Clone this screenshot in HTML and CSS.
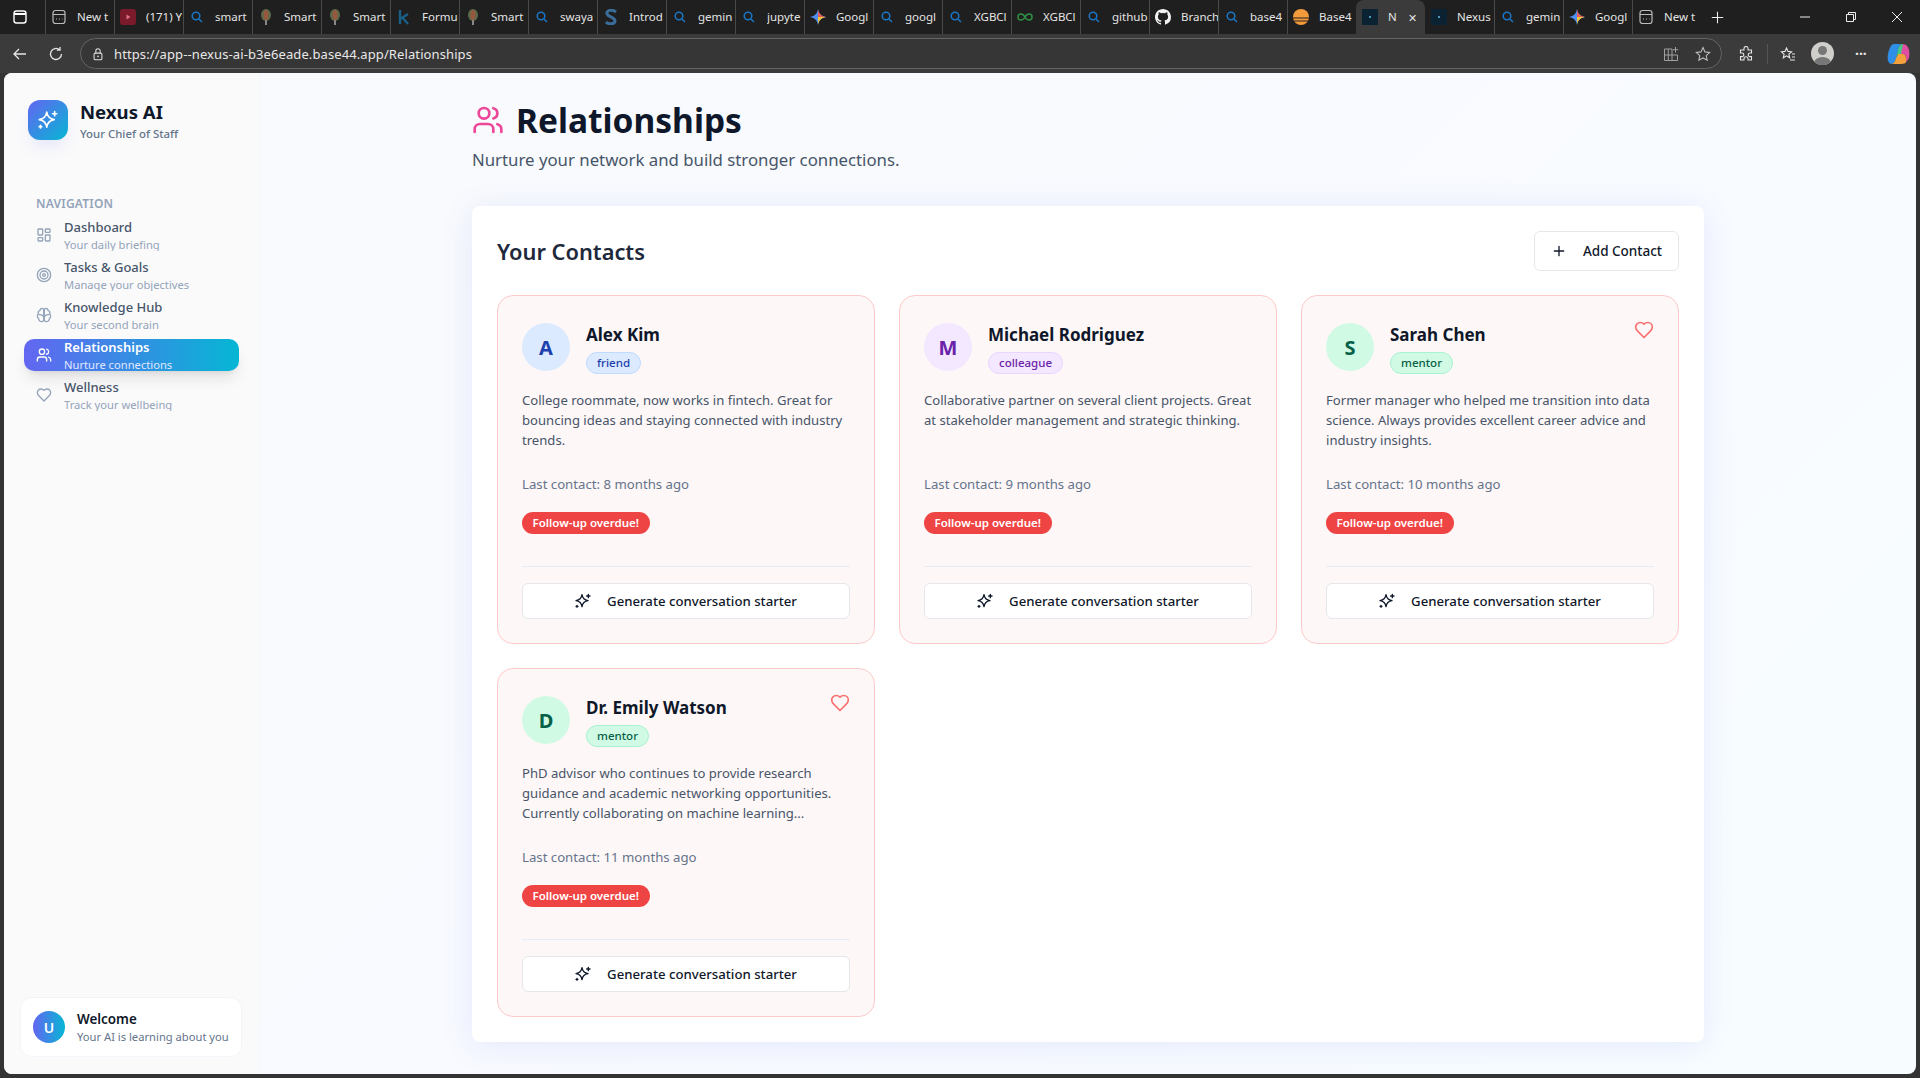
FILE: index.html
```html
<!DOCTYPE html>
<html lang="en">
<head>
    <meta charset="UTF-8">
    <title>Relationships</title>
    <link rel="stylesheet" href="styles.css">
</head>
<body>
    <svg class="defs" width="0" height="0">
        <symbol id="i-page" viewBox="0 0 16 16"><rect x="2" y="1.5" width="12" height="13" rx="2.5" fill="none" stroke="#bbb" stroke-width="1.2"/><path d="M2 5.5h12M5 10h1M8 10h1M11 10h.5" stroke="#bbb" stroke-width="1.2" fill="none"/></symbol>
        <symbol id="i-yt" viewBox="0 0 16 16"><rect width="16" height="16" rx="3" fill="#7a1a2b"/><path d="M6.5 5.5v5l4-2.500z" fill="#e0707f"/></symbol>
        <symbol id="i-search" viewBox="0 0 16 16"><circle cx="7" cy="7" r="3.800" fill="none" stroke="#1a76c4" stroke-width="1.500"/><path d="M10 10l3 3" stroke="#1a76c4" stroke-width="1.500"/></symbol>
        <symbol id="i-smart" viewBox="0 0 16 16"><ellipse cx="8" cy="6" rx="5" ry="6" fill="#5b6b4a"/><ellipse cx="8" cy="6" rx="2.500" ry="5" fill="#96583e"/><path d="M7 11h2v5H7z" fill="#888"/></symbol>
        <symbol id="i-k" viewBox="0 0 16 16"><path d="M4 1v14M12 5l-8 5M6 8l6 7" stroke="#1b5f86" stroke-width="2.400" fill="none"/></symbol>
        <symbol id="i-s" viewBox="0 0 16 16"><path d="M13 3C9 0 3 1 4 5c1 3 8 3 8 7 0 3-6 4-9 1" stroke="#3a6d99" stroke-width="3" fill="none"/></symbol>
        <symbol id="i-gem" viewBox="0 0 16 16"><path d="M8 0c.7 4.500 3 7 8 8-5 1-7.300 3.500-8 8-.7-4.500-3-7-8-8 5-1 7.300-3.500 8-8z" fill="#4d8ff0"/><path d="M8 0c.7 4.500 3 7 8 8H8z" fill="#e85a5a"/><path d="M8 16c.7-4.500 3-7 8-8H8z" fill="#f4c534"/></symbol>
        <symbol id="i-gfg" viewBox="0 0 16 16"><path d="M8 8C6 4 1 4 1 8s5 4 7 0c2-4 7-4 7 0s-5 4-7 0z" fill="none" stroke="#2f8d46" stroke-width="1.500"/></symbol>
        <symbol id="i-github" viewBox="0 0 16 16"><path fill="#f2f2f2" d="M8 0C3.580 0 0 3.580 0 8c0 3.540 2.290 6.530 5.470 7.590.4.070.55-.17.55-.38v-1.340c-2.230.48-2.700-1.070-2.700-1.070-.36-.92-.89-1.170-.89-1.170-.73-.5.050-.49.050-.49.800.060 1.230.830 1.230.830.710 1.220 1.870.870 2.330.660.070-.520.280-.870.510-1.070-1.780-.200-3.640-.890-3.640-3.950 0-.870.310-1.590.820-2.150-.080-.200-.360-1.020.080-2.120 0 0 .670-.210 2.200.820a7.600 7.600 0 0 1 4 0c1.530-1.040 2.200-.820 2.200-.820.440 1.100.160 1.920.080 2.120.510.560.820 1.270.820 2.150 0 3.070-1.870 3.750-3.650 3.950.290.250.540.730.540 1.480v2.200c0 .210.150.460.550.380A8 8 0 0 0 16 8c0-4.420-3.580-8-8-8z"/></symbol>
        <symbol id="i-orange" viewBox="0 0 16 16"><circle cx="8" cy="8" r="8" fill="#f29a3c"/><path d="M0 9h16M1 12h14" stroke="#26221f" stroke-width="1"/></symbol>
        <symbol id="i-nexus" viewBox="0 0 16 16"><rect width="16" height="16" fill="#0b2233"/><rect x="7" y="7" width="2" height="2" fill="#4a9bb5"/></symbol>
        <symbol id="i-sparkle" viewBox="0 0 24 24"><path d="M10.500 2.500c.9 5.600 3.400 8.100 9 9-5.600.9-8.100 3.400-9 9-.9-5.600-3.400-8.100-9-9 5.600-.9 8.100-3.400 9-9z" fill="none" stroke="currentColor" stroke-width="2" stroke-linejoin="round"/><path d="M20 2v5M22.500 4.500h-5M3 18.500v3M4.500 20h-3" fill="none" stroke="currentColor" stroke-width="2" stroke-linecap="round"/></symbol>
        <symbol id="i-users" viewBox="0 0 24 24"><g fill="none" stroke="currentColor" stroke-width="2" stroke-linecap="round" stroke-linejoin="round"><path d="M16 21v-2a4 4 0 0 0-4-4H6a4 4 0 0 0-4 4v2"/><circle cx="9" cy="7" r="4"/><path d="M22 21v-2a4 4 0 0 0-3-3.870"/><path d="M16 3.130a4 4 0 0 1 0 7.750"/></g></symbol>
        <symbol id="i-heart" viewBox="0 0 24 24"><path d="M19 14c1.490-1.460 3-3.210 3-5.500A5.500 5.500 0 0 0 16.500 3c-1.760 0-3 .5-4.500 2-1.500-1.500-2.740-2-4.500-2A5.500 5.500 0 0 0 2 8.500c0 2.300 1.500 4.050 3 5.500l7 7z" fill="none" stroke="currentColor" stroke-width="2" stroke-linecap="round" stroke-linejoin="round"/></symbol>
    </svg>

    <div class="tabstrip">
        <svg class="tab-actions" viewBox="0 0 16 16"><rect x="2" y="2" width="12" height="12" rx="2.500" fill="none" stroke="#fff" stroke-width="1.400"/><path d="M2 5h12" stroke="#fff" stroke-width="2"/></svg>
        <div class="tabs">
            <div class="tab"><svg class="fav"><use href="#i-page"/></svg><span>New t</span></div>
            <div class="tab"><svg class="fav"><use href="#i-yt"/></svg><span>(171) Y</span></div>
            <div class="tab"><svg class="fav"><use href="#i-search"/></svg><span>smart</span></div>
            <div class="tab"><svg class="fav"><use href="#i-smart"/></svg><span>Smart</span></div>
            <div class="tab"><svg class="fav"><use href="#i-smart"/></svg><span>Smart</span></div>
            <div class="tab"><svg class="fav"><use href="#i-k"/></svg><span>Formu</span></div>
            <div class="tab"><svg class="fav"><use href="#i-smart"/></svg><span>Smart</span></div>
            <div class="tab"><svg class="fav"><use href="#i-search"/></svg><span>swaya</span></div>
            <div class="tab"><svg class="fav"><use href="#i-s"/></svg><span>Introd</span></div>
            <div class="tab"><svg class="fav"><use href="#i-search"/></svg><span>gemin</span></div>
            <div class="tab"><svg class="fav"><use href="#i-search"/></svg><span>jupyte</span></div>
            <div class="tab"><svg class="fav"><use href="#i-gem"/></svg><span>Googl</span></div>
            <div class="tab"><svg class="fav"><use href="#i-search"/></svg><span>googl</span></div>
            <div class="tab"><svg class="fav"><use href="#i-search"/></svg><span>XGBCl</span></div>
            <div class="tab"><svg class="fav"><use href="#i-gfg"/></svg><span>XGBCl</span></div>
            <div class="tab"><svg class="fav"><use href="#i-search"/></svg><span>github</span></div>
            <div class="tab"><svg class="fav"><use href="#i-github"/></svg><span>Branch</span></div>
            <div class="tab"><svg class="fav"><use href="#i-search"/></svg><span>base4</span></div>
            <div class="tab"><svg class="fav"><use href="#i-orange"/></svg><span>Base4</span></div>
            <div class="tab tab-active"><svg class="fav"><use href="#i-nexus"/></svg><span>N</span><b class="tab-close">✕</b></div>
            <div class="tab tab-after"><svg class="fav"><use href="#i-nexus"/></svg><span>Nexus</span></div>
            <div class="tab"><svg class="fav"><use href="#i-search"/></svg><span>gemin</span></div>
            <div class="tab"><svg class="fav"><use href="#i-gem"/></svg><span>Googl</span></div>
            <div class="tab"><svg class="fav"><use href="#i-page"/></svg><span>New t</span></div>
        </div>
        <svg class="new-tab" viewBox="0 0 16 16"><path d="M8 1v14M1 8h14" stroke="#eee" stroke-width="1.300"/></svg>
        <div class="window-btns">
            <svg viewBox="0 0 12 12"><path d="M1 6h10" stroke="#eee"/></svg>
            <svg viewBox="0 0 12 12"><path d="M1.500 3.500h7v7h-7zM3.500 3.500v-2h7v7h-2" fill="none" stroke="#eee"/></svg>
            <svg viewBox="0 0 12 12"><path d="M1 1l10 10M11 1L1 11" stroke="#eee"/></svg>
        </div>
    </div>

    <div class="toolbar">
        <svg class="tool" viewBox="0 0 16 16"><path d="M14 8H2M7 3L2 8l5 5" fill="none" stroke="#e6e6e6" stroke-width="1.300"/></svg>
        <svg class="tool" viewBox="0 0 16 16"><path d="M13.500 8a5.500 5.500 0 1 1-1.800-4.100M12 1v3.200H8.800" fill="none" stroke="#e6e6e6" stroke-width="1.300"/></svg>
        <div class="address">
            <svg class="lock" viewBox="0 0 16 16"><rect x="3.500" y="7" width="9" height="7.500" rx="1.500" fill="none" stroke="#ddd" stroke-width="1.200"/><path d="M5.500 7V4.500a2.500 2.500 0 0 1 5 0V7" fill="none" stroke="#ddd" stroke-width="1.200"/><circle cx="8" cy="10.700" r="1" fill="#ddd"/></svg>
            <span class="url">https://app--nexus-ai-b3e6eade.base44.app/Relationships</span>
            <svg class="addr-icon" viewBox="0 0 16 16"><path d="M1.500 3h7.500v11.500H1.500zM1.500 9H14.500V14.500H9M5.250 3v11.500M12.500 1v5.500M9.800 3.700h5.400" fill="none" stroke="#a0a0a0" stroke-width="1"/></svg>
            <svg class="addr-icon" viewBox="0 0 16 16"><path d="M8 1.500l2 4.400 4.700.500-3.500 3.200 1 4.700L8 12l-4.200 2.300 1-4.700L1.300 6.400 6 5.900z" fill="none" stroke="#bbb" stroke-width="1.100"/></svg>
        </div>
        <svg class="tool tool-ext" viewBox="0 0 16 16"><path d="M6 2.500a2 2 0 0 1 4 0V4h3.500v3H12a1.800 1.800 0 0 0 0 3.600h1.500V14H10v-1.200a2 2 0 0 0-4 0V14H2.500v-3.400H4A1.800 1.800 0 0 0 4 7H2.500V4H6z" fill="none" stroke="#e6e6e6" stroke-width="1.100"/></svg>
        <span class="tool-sep"></span>
        <svg class="tool" viewBox="0 0 16 16"><path d="M6.500 2l1.500 3.400 3.600.4-2.700 2.400.8 3.600-3.200-1.900-3.200 1.900.8-3.600L1.400 5.800 5 5.400zM12 8h3M12 11h3M10 14h5" fill="none" stroke="#e6e6e6" stroke-width="1.100"/></svg>
        <div class="profile"><span class="profile-head"></span><span class="profile-body"></span></div>
        <span class="more">···</span>
        <svg class="copilot" viewBox="0 0 24 24"><path d="M7 2h9c-3 0-4 2-5 6l-2 8c-.700 3-2 6-5 6-3-1-4-5-3-10C2 7 4 2 7 2z" fill="#2f8fe8"/><path d="M16 2c3 0 5 2 6 6 1 5 0 10-3 12 1-4-1-8-3-8h-5l1-4c1-4 2-6 4-6z" fill="#e04f9f"/><path d="M4 22h10c3 0 5-1 5-2 1-4-1-8-3-8h-5l-2 4c-.700 3-2 6-5 6z" fill="#f2a13c"/><path d="M9 16l2-8c.500-3 2-6 5-6l-2 10h-3z" fill="#42c98a"/></svg>
    </div>

    <div class="page">
        <aside class="sidebar">
            <div class="brand">
                <div class="brand-logo"><svg><use href="#i-sparkle"/></svg></div>
                <div class="brand-text">
                    <div class="brand-name">Nexus AI</div>
                    <div class="brand-sub">Your Chief of Staff</div>
                </div>
            </div>
            <div class="nav-label">NAVIGATION</div>
            <nav class="nav">
                <a class="nav-item">
                    <svg class="nav-icon" viewBox="0 0 24 24"><g fill="none" stroke="currentColor" stroke-width="2" stroke-linejoin="round"><rect x="3" y="3" width="7" height="9" rx="1"/><rect x="14" y="3" width="7" height="5" rx="1"/><rect x="14" y="12" width="7" height="9" rx="1"/><rect x="3" y="16" width="7" height="5" rx="1"/></g></svg>
                    <div class="nav-text"><div class="nav-title">Dashboard</div><div class="nav-sub">Your daily briefing</div></div>
                </a>
                <a class="nav-item">
                    <svg class="nav-icon" viewBox="0 0 24 24"><g fill="none" stroke="currentColor" stroke-width="2"><circle cx="12" cy="12" r="10"/><circle cx="12" cy="12" r="6"/><circle cx="12" cy="12" r="2"/></g></svg>
                    <div class="nav-text"><div class="nav-title">Tasks &amp; Goals</div><div class="nav-sub">Manage your objectives</div></div>
                </a>
                <a class="nav-item">
                    <svg class="nav-icon" viewBox="0 0 24 24"><g fill="none" stroke="currentColor" stroke-width="2" stroke-linecap="round" stroke-linejoin="round"><path d="M12 5a3 3 0 1 0-5.997.125 4 4 0 0 0-2.526 5.770 4 4 0 0 0 .556 6.588A4 4 0 1 0 12 18z"/><path d="M12 5a3 3 0 1 1 5.997.125 4 4 0 0 1 2.526 5.770 4 4 0 0 1-.556 6.588A4 4 0 1 1 12 18z"/><path d="M12 5v13M4 11c3 0 5 1 8 3M20 11c-3 0-5 1-8 3"/></g></svg>
                    <div class="nav-text"><div class="nav-title">Knowledge Hub</div><div class="nav-sub">Your second brain</div></div>
                </a>
                <a class="nav-item nav-active">
                    <svg class="nav-icon"><use href="#i-users"/></svg>
                    <div class="nav-text"><div class="nav-title">Relationships</div><div class="nav-sub">Nurture connections</div></div>
                </a>
                <a class="nav-item">
                    <svg class="nav-icon"><use href="#i-heart"/></svg>
                    <div class="nav-text"><div class="nav-title">Wellness</div><div class="nav-sub">Track your wellbeing</div></div>
                </a>
            </nav>
            <div class="welcome">
                <div class="welcome-avatar">U</div>
                <div>
                    <div class="welcome-title">Welcome</div>
                    <div class="welcome-sub">Your AI is learning about you</div>
                </div>
            </div>
        </aside>

        <main class="main">
            <div class="content">
                <header class="page-head">
                    <h1 class="page-title"><svg class="title-icon"><use href="#i-users"/></svg>Relationships</h1>
                    <p class="page-sub">Nurture your network and build stronger connections.</p>
                </header>

                <section class="panel">
                    <div class="panel-head">
                        <h2>Your Contacts</h2>
                        <button class="add-btn"><svg viewBox="0 0 24 24"><path d="M5 12h14M12 5v14" fill="none" stroke="currentColor" stroke-width="2" stroke-linecap="round"/></svg>Add Contact</button>
                    </div>

                    <div class="contacts">
                        <article class="contact">
                            <div class="contact-top">
                                <div class="avatar avatar-friend">A</div>
                                <div class="contact-id">
                                    <h3>Alex Kim</h3>
                                    <span class="tag tag-friend">friend</span>
                                </div>
                            </div>
                            <p class="desc">College roommate, now works in fintech. Great for bouncing ideas and staying connected with industry trends.</p>
                            <p class="last">Last contact: 8 months ago</p>
                            <span class="overdue">Follow-up overdue!</span>
                            <button class="starter"><svg><use href="#i-sparkle"/></svg>Generate conversation starter</button>
                        </article>

                        <article class="contact">
                            <div class="contact-top">
                                <div class="avatar avatar-colleague">M</div>
                                <div class="contact-id">
                                    <h3>Michael Rodriguez</h3>
                                    <span class="tag tag-colleague">colleague</span>
                                </div>
                            </div>
                            <p class="desc">Collaborative partner on several client projects. Great at stakeholder management and strategic thinking.</p>
                            <p class="last">Last contact: 9 months ago</p>
                            <span class="overdue">Follow-up overdue!</span>
                            <button class="starter"><svg><use href="#i-sparkle"/></svg>Generate conversation starter</button>
                        </article>

                        <article class="contact">
                            <svg class="fav-heart"><use href="#i-heart"/></svg>
                            <div class="contact-top">
                                <div class="avatar avatar-mentor">S</div>
                                <div class="contact-id">
                                    <h3>Sarah Chen</h3>
                                    <span class="tag tag-mentor">mentor</span>
                                </div>
                            </div>
                            <p class="desc">Former manager who helped me transition into data science. Always provides excellent career advice and industry insights.</p>
                            <p class="last">Last contact: 10 months ago</p>
                            <span class="overdue">Follow-up overdue!</span>
                            <button class="starter"><svg><use href="#i-sparkle"/></svg>Generate conversation starter</button>
                        </article>

                        <article class="contact">
                            <svg class="fav-heart"><use href="#i-heart"/></svg>
                            <div class="contact-top">
                                <div class="avatar avatar-mentor">D</div>
                                <div class="contact-id">
                                    <h3>Dr. Emily Watson</h3>
                                    <span class="tag tag-mentor">mentor</span>
                                </div>
                            </div>
                            <p class="desc">PhD advisor who continues to provide research guidance and academic networking opportunities. Currently collaborating on machine learning...</p>
                            <p class="last">Last contact: 11 months ago</p>
                            <span class="overdue">Follow-up overdue!</span>
                            <button class="starter"><svg><use href="#i-sparkle"/></svg>Generate conversation starter</button>
                        </article>
                    </div>
                </section>
            </div>
        </main>
    </div>
</body>
</html>
```

FILE: styles.css
```css
html, body {
    height: 100%;
}
body {
    margin: 0;
    font-family: "Noto Sans", sans-serif;
    background: #333;
    display: flex;
    flex-direction: column;
    overflow: hidden;
}
.defs {
    position: absolute;
}

/* browser */
.tabstrip {
    height: 34px;
    background: #1f1f1f;
    display: flex;
    align-items: center;
    flex: none;
    font-size: 11.500px;
    color: #e4e4e4;
}
.tab-actions {
    width: 16px;
    height: 16px;
    margin: 0 8px 0 12px;
    flex: none;
    padding-right: 9px;
    box-sizing: content-box;
}
.tabs {
    display: flex;
    height: 100%;
    flex: none;
}
.tab {
    width: 69px;
    height: 100%;
    box-sizing: border-box;
    display: flex;
    align-items: center;
    padding-left: 5px;
    border-left: 1px solid #4a4a4a;
    background-clip: padding-box;
    overflow: hidden;
    white-space: nowrap;
}
.tab span {
    overflow: hidden;
    margin: 0 0 2px 10px;
    width: 37px;
}
.tab-active {
    background: #3b3b3b;
    border-left: 0;
    border-radius: 8px 8px 0 0;
    padding-left: 6px;
}
.tab-active span {
    width: 12px;
}
.tab-after {
    border-left: 0;
    padding-left: 6px;
}
.tab-close {
    font-weight: normal;
    font-size: 11px;
    margin-left: 8px;
}
.fav {
    width: 16px;
    height: 16px;
    flex: none;
}
.new-tab {
    width: 13px;
    height: 13px;
    margin-left: 10px;
    flex: none;
}
.window-btns {
    margin-left: auto;
    display: flex;
    gap: 34px;
    padding-right: 17px;
}
.window-btns svg {
    width: 12px;
    height: 12px;
}
.toolbar {
    height: 39px;
    flex: none;
    background: #3b3b3b;
    display: flex;
    align-items: center;
    padding: 0 0 0 12px;
    box-sizing: border-box;
}
.tool {
    width: 16px;
    height: 16px;
    flex: none;
    margin-right: 20px;
}
.address {
    width: 1642px;
    height: 31px;
    flex: none;
    margin-left: -4px;
    box-sizing: border-box;
    border: 1px solid #646464;
    border-radius: 16px;
    background: #363636;
    display: flex;
    align-items: center;
    padding: 0 10px 0 10px;
    font-size: 13px;
    letter-spacing: 0.1px;
    color: #e8e8e8;
}
.lock {
    width: 14px;
    height: 14px;
    margin-right: 9px;
    flex: none;
}
.url {
    flex: 1;
}
.addr-icon {
    width: 16px;
    height: 16px;
    margin-left: 16px;
}
.tool-ext {
    margin: 0 13px 0 16px;
}
.tool-sep {
    width: 1px;
    height: 20px;
    background: #555;
    margin-right: 12px;
    flex: none;
}
.tool-sep + .tool {
    margin-right: 15px;
}
.profile {
    width: 23px;
    height: 23px;
    border-radius: 50%;
    background: #d0cfcc;
    position: relative;
    overflow: hidden;
    flex: none;
}
.profile-head {
    position: absolute;
    left: 7px;
    top: 4px;
    width: 9px;
    height: 9px;
    border-radius: 50%;
    background: #777;
}
.profile-body {
    position: absolute;
    left: 3px;
    top: 15px;
    width: 17px;
    height: 12px;
    border-radius: 50%;
    background: #777;
}
.more {
    color: #e6e6e6;
    font-size: 14px;
    margin: 0 20px 0 21px;
    font-weight: bold;
    flex: none;
}
.copilot {
    width: 24px;
    height: 24px;
    flex: none;
}

/* app */
.page {
    flex: 1;
    min-height: 0;
    margin: 0 4px 4px 4px;
    border-radius: 8px;
    overflow: hidden;
    display: flex;
    background: linear-gradient(135deg, #f8fafc, #f8faff 50%, #f7fdff);
}
.sidebar {
    width: 256px;
    flex: none;
    box-sizing: border-box;
    background: #fafafb;
    border-right: 1px solid #f5f6f9;
    display: flex;
    flex-direction: column;
    padding: 27px 17px 17px 16px;
}
.brand {
    display: flex;
    align-items: center;
    gap: 12px;
    padding-left: 8px;
    height: 40px;
}
.brand-logo {
    width: 40px;
    height: 40px;
    border-radius: 12px;
    background: linear-gradient(135deg, #6366f1, #06b6d4);
    color: #fff;
    display: flex;
    align-items: center;
    justify-content: center;
    box-shadow: 0 10px 15px -3px rgba(99, 102, 241, 0.12);
}
.brand-logo svg {
    width: 20px;
    height: 20px;
}
.brand-text {
    margin-top: 2px;
}
.brand-name {
    font-size: 18.600px;
    line-height: 24px;
    font-weight: 700;
    color: #0f172a;
}
.brand-sub {
    margin-top: 2px;
    font-size: 11.400px;
    line-height: 16px;
    font-weight: 500;
    color: #64748b;
}
.nav-label {
    margin-top: 56px;
    padding-left: 16px;
    font-size: 12px;
    line-height: 16px;
    font-weight: 600;
    letter-spacing: 0.2px;
    color: #94a3b8;
}
.nav {
    margin-top: 7px;
    display: flex;
    flex-direction: column;
    gap: 8px;
}
.nav-item {
    height: 32px;
    width: 215px;
    margin-left: 4px;
    box-sizing: border-box;
    padding: 0 12px;
    border-radius: 10px;
    display: flex;
    align-items: center;
    gap: 12px;
    overflow: hidden;
    color: #94a3b8;
}
.nav-icon {
    width: 16px;
    height: 16px;
    flex: none;
}
.nav-title {
    font-size: 13px;
    line-height: 20px;
    font-weight: 500;
    color: #475569;
}
.nav-sub {
    font-size: 11.200px;
    line-height: 16px;
    color: #94a3b8;
}
.nav-active {
    background: linear-gradient(90deg, #6366f1, #06b6d4);
    box-shadow: 0 10px 15px -3px rgba(0, 0, 0, 0.1), 0 4px 6px -4px rgba(0, 0, 0, 0.1);
    color: #fff;
}
.nav-active .nav-title {
    color: #fff;
    font-weight: 600;
}
.nav-active .nav-sub {
    color: #e0e7ff;
}
.welcome {
    margin-top: auto;
    display: flex;
    align-items: center;
    gap: 12px;
    height: 60px;
    box-sizing: border-box;
    padding: 0 12px;
    border: 1px solid #f1f5f9;
    border-radius: 12px;
    background: #fff;
}
.welcome-avatar {
    width: 32px;
    height: 32px;
    border-radius: 50%;
    background: linear-gradient(90deg, #6366f1, #06b6d4);
    color: #fff;
    font-size: 14px;
    font-weight: 600;
    display: flex;
    align-items: center;
    justify-content: center;
    flex: none;
}
.welcome-title {
    font-size: 13.400px;
    line-height: 20px;
    font-weight: 600;
    color: #0f172a;
}
.welcome-sub {
    font-size: 11.200px;
    line-height: 16px;
    color: #64748b;
    white-space: nowrap;
}
.main {
    flex: 1;
    min-width: 0;
    display: flex;
    justify-content: center;
}
.content {
    width: 1232px;
    padding-top: 27px;
}
.page-title {
    margin: 0;
    display: flex;
    align-items: center;
    gap: 12px;
    font-size: 33.500px;
    line-height: 40px;
    font-weight: 700;
    color: #0f172a;
}
.title-icon {
    width: 32px;
    height: 32px;
    color: #ec4899;
}
.page-sub {
    margin: 6px 0 0;
    font-size: 16.800px;
    line-height: 28px;
    color: #475569;
}
.panel {
    margin-top: 32px;
    background: #fff;
    border-radius: 8px;
    padding: 25px;
    box-shadow: 0 4px 32px rgba(99, 102, 241, 0.12);
}
.panel-head {
    display: flex;
    align-items: center;
    justify-content: space-between;
    height: 40px;
}
.panel-head h2 {
    margin: 0;
    font-size: 21.800px;
    font-weight: 600;
    color: #1e293b;
}
.add-btn {
    height: 40px;
    width: 145px;
    display: flex;
    align-items: center;
    justify-content: center;
    gap: 16px;
    background: #fff;
    border: 1px solid #e5e7eb;
    border-radius: 6px;
    font-family: inherit;
    font-size: 13.500px;
    font-weight: 500;
    color: #0f172a;
}
.add-btn svg {
    width: 16px;
    height: 16px;
}
.contacts {
    margin-top: 24px;
    display: grid;
    grid-template-columns: repeat(3, 1fr);
    gap: 24px;
}
.contact {
    position: relative;
    border: 1px solid #fecaca;
    border-radius: 16px;
    background: #fef7f7;
    padding: 24px;
    height: 349px;
    box-sizing: border-box;
    display: flex;
    flex-direction: column;
    align-items: flex-start;
}
.fav-heart {
    position: absolute;
    top: 24px;
    right: 24px;
    width: 20px;
    height: 20px;
    color: #f87171;
}
.contact-top {
    display: flex;
    align-items: center;
    gap: 16px;
}
.contact-id {
    display: flex;
    flex-direction: column;
    align-items: flex-start;
    gap: 3px;
}
.contact-top h3 {
    margin: 0;
    padding-top: 1px;
    font-size: 17px;
    line-height: 28px;
    font-weight: 700;
    color: #0f172a;
}
.avatar {
    width: 48px;
    height: 48px;
    border-radius: 50%;
    font-size: 20px;
    font-weight: 700;
    display: flex;
    align-items: center;
    justify-content: center;
    flex: none;
}
.avatar-friend {
    background: #dbeafe;
    color: #1e40af;
}
.avatar-colleague {
    background: #f3e8ff;
    color: #6b21a8;
}
.avatar-mentor {
    background: #d1fae5;
    color: #065f46;
}
.tag {
    display: block;
    border: 1px solid;
    border-radius: 999px;
    padding: 0 10px;
    font-size: 11.500px;
    line-height: 20px;
    font-weight: 500;
}
.tag-friend {
    background: #dbeafe;
    border-color: #bfdbfe;
    color: #1e40af;
}
.tag-colleague {
    background: #f3e8ff;
    border-color: #e9d5ff;
    color: #6b21a8;
}
.tag-mentor {
    background: #d1fae5;
    border-color: #a7f3d0;
    color: #065f46;
}
.desc {
    margin: 16px 0 0;
    width: calc(100% + 6px);
    height: 60px;
    font-size: 13.100px;
    line-height: 20px;
    color: #475569;
}
.last {
    margin: 24px 0 0;
    font-size: 13.200px;
    line-height: 20px;
    color: #64748b;
}
.overdue {
    margin-top: 18px;
    border-radius: 999px;
    background: #ef4444;
    color: #fff;
    font-size: 11.500px;
    line-height: 22px;
    font-weight: 600;
    padding: 0 10.500px;
}
.starter {
    margin-top: auto;
    width: 100%;
    height: 36px;
    display: flex;
    align-items: center;
    justify-content: center;
    gap: 16px;
    background: #fff;
    border: 1px solid #e5e7eb;
    border-radius: 6px;
    font-family: inherit;
    font-size: 13.200px;
    font-weight: 500;
    color: #0f172a;
    position: relative;
}
.starter::before {
    content: "";
    position: absolute;
    left: -1px;
    right: -1px;
    top: -18px;
    border-top: 1px solid #e8ecf4;
}
.starter svg {
    width: 16px;
    height: 16px;
}
```
